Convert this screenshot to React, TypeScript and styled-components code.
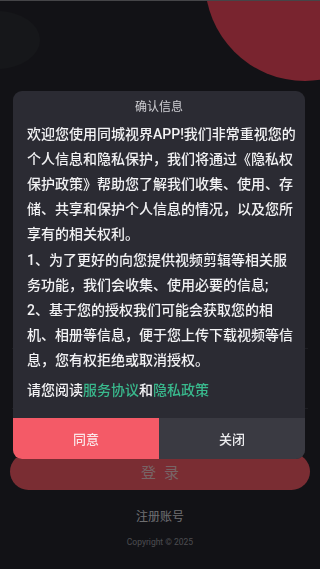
import styled, { createGlobalStyle } from "styled-components"

const GlobalStyle = createGlobalStyle`
  html, body {
    margin: 0;
    padding: 0;
    background: #121216;
  }
  * {
    box-sizing: border-box;
  }
  body {
    font-family: "Roboto", "Noto Sans CJK SC", sans-serif;
  }
`

const Page = styled.div`
  position: relative;
  width: 320px;
  height: 569px;
  overflow: hidden;
  background: #25252c;
  border-top: 1px solid #8a8a90;
  display: flex;
  flex-direction: column;
  padding: 0 12px;
`

const Blob = styled.div<{ $color: string; $w: number; $h: number; $top: number; $left: number }>`
  position: absolute;
  top: ${p => p.$top}px;
  left: ${p => p.$left}px;
  width: ${p => p.$w}px;
  height: ${p => p.$h}px;
  border-radius: 50%;
  background: ${p => p.$color};
`

const Hero = styled.div`
  height: 300px;
  flex-shrink: 0;
`

// input rows sit hidden behind the dialog, only their lines are kept
const Field = styled.div`
  height: 48px;
  margin-bottom: 12px;
  flex-shrink: 0;
  border-bottom: 1px solid #3a3a44;
`

const LoginButton = styled.div`
  margin: 32px -2px 0;
  height: 37px;
  border-radius: 19px;
  background: #f45a67;
  display: flex;
  align-items: center;
  justify-content: center;
  color: #f0c8cc;
  font-size: 15px;
  letter-spacing: 8px;
  padding-left: 8px;
  flex-shrink: 0;
`

const Register = styled.div`
  margin-top: 20px;
  text-align: center;
  font-size: 12px;
  line-height: 14px;
  color: #dcdce0;
`

const Copyright = styled.div`
  margin-top: 12px;
  text-align: center;
  font-size: 8.5px;
  line-height: 12px;
  color: #9898a0;
`

const Overlay = styled.div`
  position: fixed;
  inset: 0;
  background: rgba(0, 0, 0, 0.5);
  display: flex;
  justify-content: center;
  align-items: flex-start;
  padding-top: 91px;
`

const Dialog = styled.div`
  width: 292px;
  margin-left: -2px;
  background: #2b2b33;
  border-radius: 9px;
  overflow: hidden;
`

const Title = styled.div`
  text-align: center;
  font-size: 12px;
  line-height: 18px;
  padding: 7px 0 6px;
  color: #cfcfd4;
`

const Body = styled.div`
  padding: 0 8px 15px 14px;
  font-size: 14px;
  font-weight: 500;
  line-height: 25px;
  color: #f2f2f4;
`

const Para = styled.p<{ $gap?: number }>`
  margin: ${p => p.$gap ?? 0}px 0 0;
`

const Link = styled.span`
  color: #39b98d;
`

const Actions = styled.div`
  display: flex;
  height: 41px;
`

const Action = styled.div<{ $primary?: boolean }>`
  flex: 1;
  display: flex;
  align-items: center;
  justify-content: center;
  font-size: 13px;
  font-weight: 500;
  background: ${p => (p.$primary ? "#f45a67" : "#3a3a42")};
  color: ${p => (p.$primary ? "#fbe4e6" : "#ececee")};
`

export default function App() {
  return (
    <>
      <GlobalStyle />
      <Page>
        <Blob $color="#f2485e" $w={200} $h={200} $top={-120} $left={205} />
        <Blob $color="#2c2e34" $w={86} $h={58} $top={10} $left={-46} />
        <Hero />
        <Field />
        <Field />
        <LoginButton>登录</LoginButton>
        <Register>注册账号</Register>
        <Copyright>Copyright © 2025</Copyright>
      </Page>
      <Overlay>
        <Dialog>
          <Title>确认信息</Title>
          <Body>
            <Para>
              欢迎您使用同城视界APP!我们非常重视您的个人信息和隐私保护，我们将通过《隐私权保护政策》帮助您了解我们收集、使用、存储、共享和保护个人信息的情况，以及您所享有的相关权利。
            </Para>
            <Para $gap={1}>1、为了更好的向您提供视频剪辑等相关服务功能，我们会收集、使用必要的信息;</Para>
            <Para>2、基于您的授权我们可能会获取您的相机、相册等信息，便于您上传下载视频等信息，您有权拒绝或取消授权。</Para>
            <Para $gap={5}>
              请您阅读<Link>服务协议</Link>和<Link>隐私政策</Link>
            </Para>
          </Body>
          <Actions>
            <Action $primary>同意</Action>
            <Action>关闭</Action>
          </Actions>
        </Dialog>
      </Overlay>
    </>
  )
}
